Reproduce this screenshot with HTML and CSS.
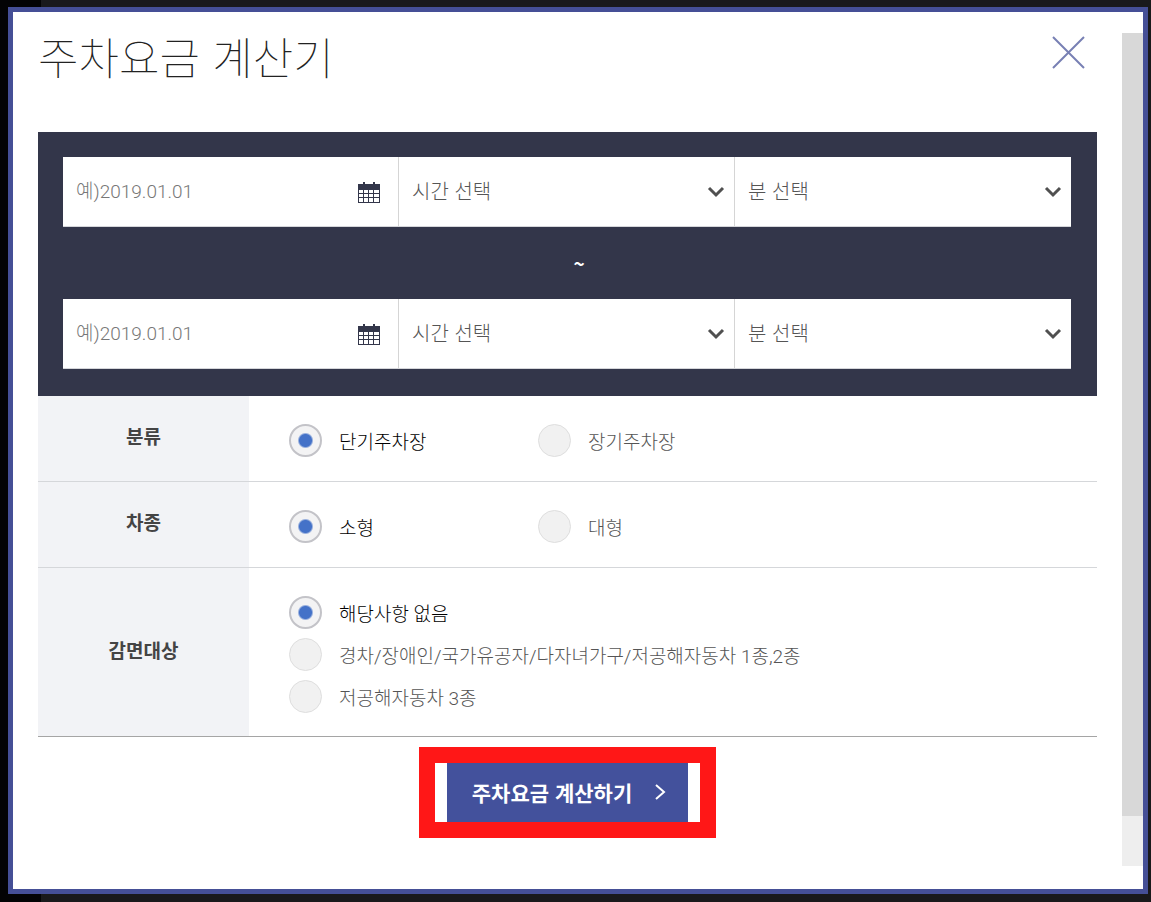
FILE: index.html
```html
<!DOCTYPE html>
<html lang="ko">
<head>
  <meta charset="UTF-8">
  <meta name="viewport" content="width=device-width, initial-scale=1.0">
  <title>주차요금 계산기</title>
  <link rel="stylesheet" href="styles.css">
</head>
<body>

  <div class="modal">
    <div class="modal-content">
      <header class="modal-header">
        <h1>주차요금 계산기</h1>
        <button type="button" class="close" aria-label="닫기">
          <svg width="34" height="34" viewBox="0 0 34 34" fill="none" stroke="#7880b4" stroke-width="2">
            <path d="M1 1L32 32M32 1L1 32"/>
          </svg>
        </button>
      </header>

      <form>
        <div class="period">
          <div class="period-row">
            <div class="field">
              <input type="text" placeholder="예)2019.01.01" aria-label="시작 날짜">
              <button type="button" class="calendar" aria-label="시작 날짜 선택">
                <svg width="22" height="21" viewBox="0 0 22 21">
                  <path fill="#33364a" fill-rule="evenodd" d="M5 0h2v2h8V0h2v2h5v19H0V2h5zM1 8v3h4V8zM6 8v3h4V8zM11 8v3h4V8zM16 8v3h5V8zM1 12v3h4v-3zM6 12v3h4v-3zM11 12v3h4v-3zM16 12v3h5v-3zM1 16v4h4v-4zM6 16v4h4v-4zM11 16v4h4v-4zM16 16v4h5v-4z"/>
                </svg>
              </button>
            </div>
            <div class="field">
              <select aria-label="시작 시간"><option>시간 선택</option></select>
              <svg class="arrow" width="18" height="12" viewBox="0 0 18 12"><path d="M2 2L9 9L16 2"/></svg>
            </div>
            <div class="field">
              <select aria-label="시작 분"><option>분 선택</option></select>
              <svg class="arrow" width="18" height="12" viewBox="0 0 18 12"><path d="M2 2L9 9L16 2"/></svg>
            </div>
          </div>

          <p class="tilde">~</p>

          <div class="period-row">
            <div class="field">
              <input type="text" placeholder="예)2019.01.01" aria-label="종료 날짜">
              <button type="button" class="calendar" aria-label="종료 날짜 선택">
                <svg width="22" height="21" viewBox="0 0 22 21">
                  <path fill="#33364a" fill-rule="evenodd" d="M5 0h2v2h8V0h2v2h5v19H0V2h5zM1 8v3h4V8zM6 8v3h4V8zM11 8v3h4V8zM16 8v3h5V8zM1 12v3h4v-3zM6 12v3h4v-3zM11 12v3h4v-3zM16 12v3h5v-3zM1 16v4h4v-4zM6 16v4h4v-4zM11 16v4h4v-4zM16 16v4h5v-4z"/>
                </svg>
              </button>
            </div>
            <div class="field">
              <select aria-label="종료 시간"><option>시간 선택</option></select>
              <svg class="arrow" width="18" height="12" viewBox="0 0 18 12"><path d="M2 2L9 9L16 2"/></svg>
            </div>
            <div class="field">
              <select aria-label="종료 분"><option>분 선택</option></select>
              <svg class="arrow" width="18" height="12" viewBox="0 0 18 12"><path d="M2 2L9 9L16 2"/></svg>
            </div>
          </div>
        </div>

        <table class="options">
          <tr>
            <th scope="row">분류</th>
            <td>
              <div class="choices">
                <label><input type="radio" name="lot" checked><span>단기주차장</span></label>
                <label><input type="radio" name="lot"><span>장기주차장</span></label>
              </div>
            </td>
          </tr>
          <tr>
            <th scope="row">차종</th>
            <td>
              <div class="choices">
                <label><input type="radio" name="car" checked><span>소형</span></label>
                <label><input type="radio" name="car"><span>대형</span></label>
              </div>
            </td>
          </tr>
          <tr>
            <th scope="row">감면대상</th>
            <td>
              <div class="choices stacked">
                <label><input type="radio" name="discount" checked><span>해당사항 없음</span></label>
                <label><input type="radio" name="discount"><span>경차/장애인/국가유공자/다자녀가구/저공해자동차 1종,2종</span></label>
                <label><input type="radio" name="discount"><span>저공해자동차 3종</span></label>
              </div>
            </td>
          </tr>
        </table>

        <div class="actions">
          <div class="highlight">
            <button type="submit" class="submit">
              주차요금 계산하기
              <svg width="12" height="16" viewBox="0 0 12 16" fill="none" stroke="#fff" stroke-width="2"><path d="M2 1L10 8L2 15"/></svg>
            </button>
          </div>
        </div>
      </form>
    </div>

    <div class="scrollbar">
      <div class="thumb"></div>
    </div>
  </div>

</body>
</html>
```

FILE: styles.css
```css
* {
  box-sizing: border-box;
}

body {
  margin: 0;
  min-height: 100vh;
  padding: 7px 3px 8px 8px;
  display: flex;
  background: linear-gradient(to right, #030304 41px, #19191b 41px);
  font-family: "Noto Sans CJK KR", sans-serif;
  font-size: 19px;
  color: #222;
}

button, input, select {
  font: inherit;
}

button {
  border: none;
  padding: 0;
  cursor: pointer;
}

.modal {
  flex: 1;
  display: flex;
  border: 5px solid #454f96;
  background: #fff;
}

.modal-content {
  flex: 1;
  padding: 0 25px;
}

.modal-header {
  display: flex;
  justify-content: space-between;
  align-items: flex-start;
  height: 120px;
  padding: 14px 11px 0 0;
}

h1 {
  margin: 0;
  font-size: 44px;
  line-height: 60px;
  font-weight: 100;
}

.close {
  margin-top: 10px;
  background: none;
}

svg {
  display: block;
}

/* date and time pickers */
.period {
  padding: 25px 26px 27px 25px;
  background: #33364a;
}

.period-row {
  display: grid;
  grid-template-columns: 1fr 1fr 1fr;
  height: 70px;
  background: #fff;
  border-bottom: 1px solid #d5d6da;
}

.field {
  position: relative;
  border-right: 1px solid #d5d5d5;
}

.field:last-child {
  border-right: none;
}

.field input,
.field select {
  width: 100%;
  height: 100%;
  padding: 0 50px 3px 13px;
  border: none;
  background: none;
  appearance: none;
  color: #555;
  font-size: 20px;
  font-weight: 300;
}

.field input {
  padding-bottom: 0;
  font-family: Roboto, "Noto Sans CJK KR", sans-serif;
  font-size: 19px;
}

.field input::placeholder {
  color: #777;
}

.calendar {
  position: absolute;
  right: 18px;
  top: 25px;
  background: none;
}

.arrow {
  position: absolute;
  right: 9px;
  top: 29px;
  fill: none;
  stroke: #505050;
  stroke-width: 3;
  pointer-events: none;
}

.tilde {
  margin: 0;
  padding-left: 24px;
  line-height: 72px;
  text-align: center;
  font-weight: 700;
  color: #fff;
}

/* option rows */
.options {
  width: 100%;
  border-collapse: separate;
  border-spacing: 0;
}

.options th {
  width: 211px;
  padding: 0 0 6px;
  background: #f2f3f6;
  font-weight: 700;
  color: #444;
}

.options td {
  padding: 28px 0 24px 40px;
}

.options th,
.options td {
  border-bottom: 1px solid #d5d7da;
}

.options tr:last-child th,
.options tr:last-child td {
  border-bottom-color: #a5a5a5;
}

.options tr:last-child td {
  padding-bottom: 23px;
}

.choices {
  display: flex;
}

.choices label {
  display: flex;
  align-items: center;
  min-width: 249px;
  height: 33px;
  font-family: Roboto, "Noto Sans CJK KR", sans-serif;
  font-weight: 300;
  color: #555;
  cursor: pointer;
}

.choices label:has(:checked) {
  color: #000;
}

.stacked {
  flex-direction: column;
  gap: 9px;
}

.choices input {
  appearance: none;
  width: 33px;
  height: 33px;
  margin: 0 17px 0 0;
  border: 1px solid #dedede;
  border-radius: 50%;
  background: #f1f1f1;
}

.choices input:checked {
  border: 2px solid #c3c3c8;
  background: radial-gradient(circle, #4472c8 6px, #f3f3f4 8px);
}

/* submit */
.actions {
  display: flex;
  justify-content: center;
  padding: 10px 0;
}

.highlight {
  padding: 0 12px;
  border: 16px solid #ff1717;
}

.submit {
  display: flex;
  align-items: center;
  gap: 22px;
  height: 59px;
  padding: 0 22px 2px 25px;
  background: #43519c;
  color: #fff;
  font-size: 21px;
  font-weight: 700;
}

.scrollbar {
  width: 21px;
  margin: 21px 0 23px;
  background: #eee;
}

.thumb {
  height: 94%;
  background: #d8d8d8;
}
```
